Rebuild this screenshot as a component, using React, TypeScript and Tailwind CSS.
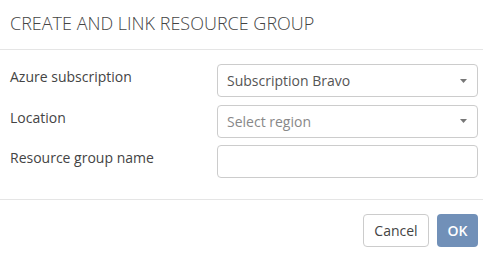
import React from "react";

function Caret() {
  return (
    <svg width="7" height="4" viewBox="0 0 7 4" className="absolute right-[10px] top-1/2 -translate-y-1/2">
      <path d="M0 0 H7 L3.5 4 Z" fill="#777" />
    </svg>
  );
}

export default function App() {
  const font = { fontFamily: '"Open Sans", "Noto Sans", sans-serif' };
  return (
    <div className="w-[483px] h-[256px] bg-white text-[#333]" style={font}>
      <div className="h-[50px] border-b border-[#e5e5e5] pl-[10px] flex items-center">
        <h1 className="text-[18px] font-light text-[#444] leading-none pb-[4px]">CREATE AND LINK RESOURCE GROUP</h1>
      </div>
      <div className="h-[150px] border-b border-[#e5e5e5] pt-[14px] pl-[10px] pr-[5px] flex flex-col gap-[7.5px]">
        <div className="flex items-center">
          <label className="w-[207px] text-[14px] text-[#444] -mt-[8px]">Azure subscription</label>
          <div className="relative w-[261px] h-[33px] border border-[#ccc] rounded-[4px] flex items-center pl-[9px] text-[14px] text-[#555]">
            Subscription Bravo
            <Caret />
          </div>
        </div>
        <div className="flex items-center">
          <label className="w-[207px] text-[14px] text-[#444] -mt-[8px]">Location</label>
          <div className="relative w-[261px] h-[33px] border border-[#ccc] rounded-[4px] flex items-center pl-[9px] text-[14px] text-[#888]">
            Select region
            <Caret />
          </div>
        </div>
        <div className="flex items-center">
          <label className="w-[207px] text-[14px] text-[#444] -mt-[8px]">Resource group name</label>
          <input className="w-[261px] h-[33px] border border-[#ccc] rounded-[4px] outline-none" />
        </div>
      </div>
      <div className="flex justify-end gap-[8px] pt-[14px] pr-[5px]">
        <button className="w-[66px] h-[33px] border border-[#ccc] rounded-[4px] bg-white text-[14px] text-[#444]">Cancel</button>
        <button className="w-[41px] h-[33px] rounded-[4px] bg-[#7190b8] text-white text-[14px] font-semibold">OK</button>
      </div>
    </div>
  );
}
